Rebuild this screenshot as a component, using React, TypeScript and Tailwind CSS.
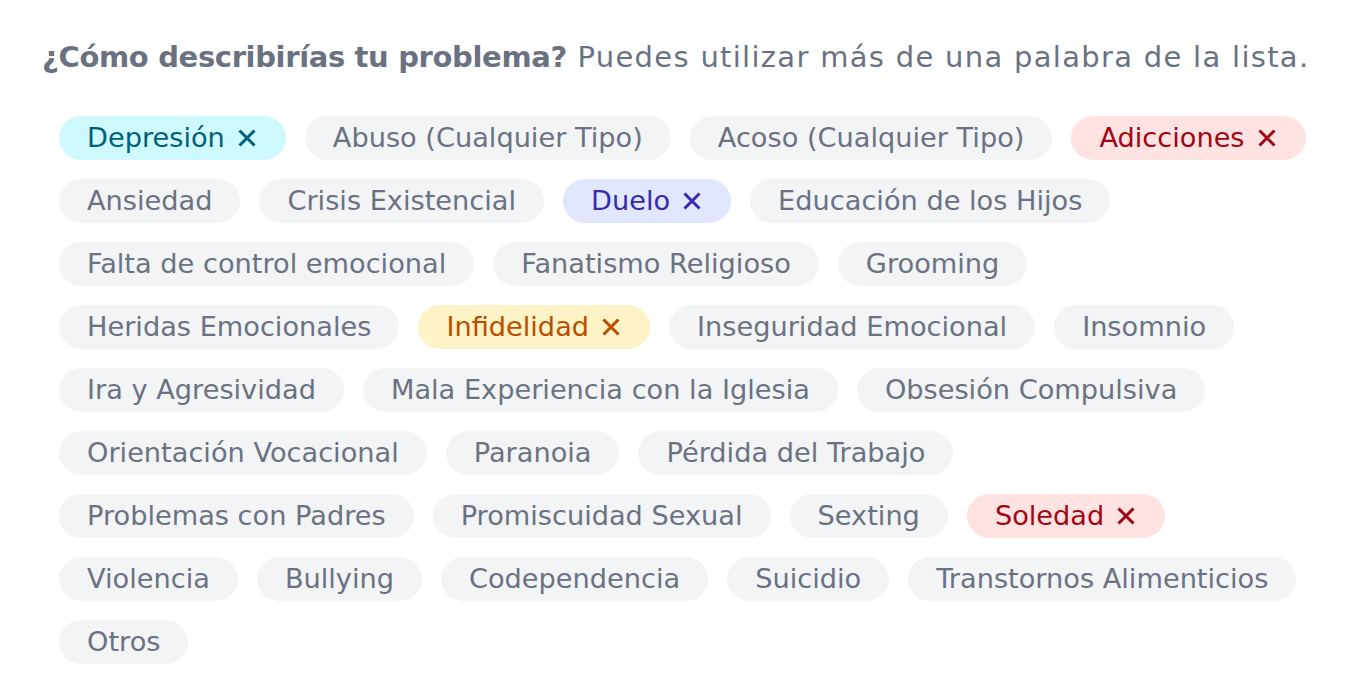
import React, { useState } from 'react';

type Tone = 'cyan' | 'red' | 'indigo' | 'amber';

const toneClasses: Record<Tone, string> = {
    cyan: 'bg-cyan-100 text-cyan-800',
    red: 'bg-red-100 text-red-800',
    indigo: 'bg-indigo-100 text-indigo-800',
    amber: 'bg-amber-100 text-amber-700',
};

const rows: string[][] = [
    ['Depresión', 'Abuso (Cualquier Tipo)', 'Acoso (Cualquier Tipo)', 'Adicciones'],
    ['Ansiedad', 'Crisis Existencial', 'Duelo', 'Educación de los Hijos'],
    ['Falta de control emocional', 'Fanatismo Religioso', 'Grooming'],
    ['Heridas Emocionales', 'Infidelidad', 'Inseguridad Emocional', 'Insomnio'],
    ['Ira y Agresividad', 'Mala Experiencia con la Iglesia', 'Obsesión Compulsiva'],
    ['Orientación Vocacional', 'Paranoia', 'Pérdida del Trabajo'],
    ['Problemas con Padres', 'Promiscuidad Sexual', 'Sexting', 'Soledad'],
    ['Violencia', 'Bullying', 'Codependencia', 'Suicidio', 'Transtornos Alimenticios'],
    ['Otros'],
];

const initialSelected: Record<string, Tone> = {
    'Depresión': 'cyan',
    'Adicciones': 'red',
    'Duelo': 'indigo',
    'Infidelidad': 'amber',
    'Soledad': 'red',
};

const tones: Tone[] = ['cyan', 'red', 'indigo', 'amber'];

const CloseIcon = () => (
    <svg className="shrink-0 w-[18px] h-[18px]" viewBox="0 0 18 18" fill="none" stroke="currentColor" strokeWidth="3" strokeLinecap="butt">
        <path d="M1.5 1.5 L16.5 16.5 M16.5 1.5 L1.5 16.5" />
    </svg>
);

const App: React.FC = () => {
    const [selected, setSelected] = useState<Record<string, Tone>>(initialSelected);

    const toggle = (name: string) => {
        setSelected(prev => {
            const next = { ...prev };
            if (next[name]) {
                delete next[name];
            } else {
                next[name] = tones[Object.keys(prev).length % tones.length];
            }
            return next;
        });
    };

    return (
        <div className="min-h-screen bg-white px-[42px] pt-[36px] font-['DejaVu_Sans',sans-serif]">
            <h2 className="text-[29px] leading-[42px] text-gray-500 whitespace-nowrap">
                <span className="font-bold tracking-[-0.35px]">¿Cómo describirías tu problema?</span>
                <span className="tracking-[1.3px]"> Puedes utilizar más de una palabra de la lista.</span>
            </h2>

            {/* Tag list */}
            <div className="mt-[38px] pl-[17px] flex flex-col gap-[19px]">
                {rows.map((row, i) => (
                    <div key={i} className="flex gap-[19px]">
                        {row.map(name => {
                            const tone = selected[name];
                            return (
                                <button
                                    key={name}
                                    onClick={() => toggle(name)}
                                    className={`shrink-0 h-[44px] rounded-full pl-[28px] flex items-center gap-[13px] text-[27.2px] whitespace-nowrap ${tone ? 'pr-[30px] ' + toneClasses[tone] : 'pr-[28px] bg-gray-100 text-gray-500'}`}
                                >
                                    <span>{name}</span>
                                    {tone && <CloseIcon />}
                                </button>
                            );
                        })}
                    </div>
                ))}
            </div>
        </div>
    );
};

export default App;
